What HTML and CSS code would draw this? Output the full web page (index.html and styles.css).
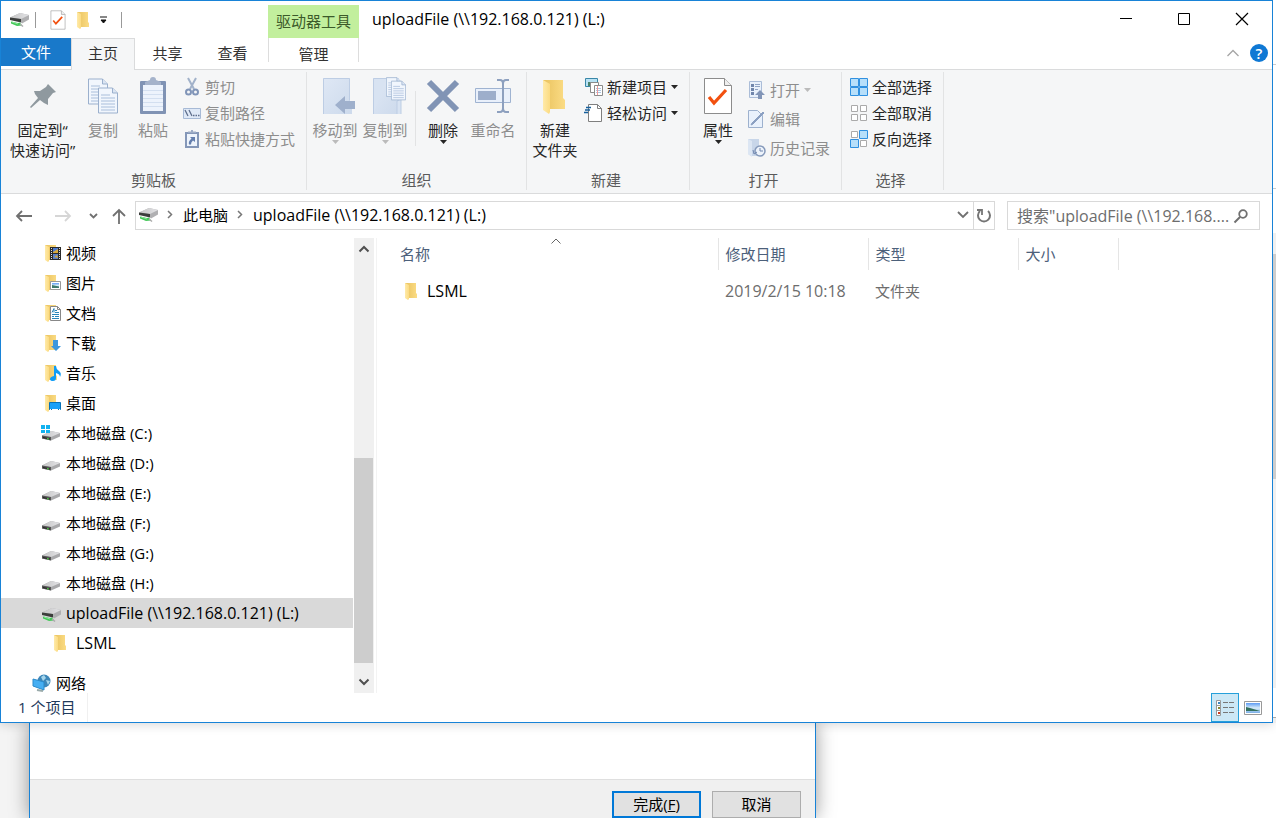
FILE: index.html
```
<!DOCTYPE html>
<html lang="zh-CN">
<head>
<meta charset="utf-8">
<title>uploadFile (\\192.168.0.121) (L:)</title>
<link rel="stylesheet" href="styles.css">
</head>
<body>
<svg class="defs" aria-hidden="true">
  <defs>
    <linearGradient id="gFront" x1="0" x2="1"><stop offset="0" stop-color="#ffeaa9"/><stop offset="1" stop-color="#fbdb82"/></linearGradient>
    <linearGradient id="gBack" x1="0" x2="1"><stop offset="0" stop-color="#e9c25e"/><stop offset="1" stop-color="#fbdc85"/></linearGradient>
    <linearGradient id="gDrive" x1="0" x2="1"><stop offset="0" stop-color="#c4c4c4"/><stop offset="1" stop-color="#e3e3e6"/></linearGradient>
    <linearGradient id="gBlue" x1="0" x2="1" y2="1"><stop offset="0" stop-color="#dfe8f5"/><stop offset="1" stop-color="#cddaec"/></linearGradient>
    <linearGradient id="gSky" x1="0" x2="0" y2="1"><stop offset="0" stop-color="#5c9bf5"/><stop offset=".5" stop-color="#d8ecf8"/><stop offset="1" stop-color="#7aaee8"/></linearGradient>
    <symbol id="folder" viewBox="0 0 16 18"><path d="M2 1h11v10l1 1v4H5z" fill="url(#gBack)"/><path d="M2 1l4 2v14l-1 1-3-2z" fill="url(#gFront)"/></symbol>
    <symbol id="drive" viewBox="0 0 20 16"><path d="M1 8.500l9-4.500 9 2v3.500l-9 4-9-2z" fill="#a9a9ab"/><path d="M1 8.500l9-4.500 9 2-9 4z" fill="url(#gDrive)"/><path d="M1 8.500l9 1.500v3.500l-9-2z" fill="#555"/><path d="M2 10l7 1.500v1L2 11z" fill="#262626"/><path d="M6 11l2 .4v1l-2-.4z" fill="#4fd545"/></symbol>
    <symbol id="netdrive" viewBox="0 0 20 16"><path d="M1 5.500L11 1l9 2v4.500l-7 4-2-2z" fill="#b0b0b2"/><path d="M1 5.500L11 1l9 2-8 4z" fill="url(#gDrive)"/><path d="M1 5.500L12 7v3.500L1 8z" fill="#3c3e3c"/><path d="M2 9.500l7 1.500 2-.5 2 3-5 .5-6-2.500z" fill="#45c95a"/><path d="M3 10l6 2" stroke="#8ce39a" fill="none"/><path d="M11 12l3 2.500" stroke="#aaa" stroke-width="1.500"/></symbol>
    <symbol id="check" viewBox="0 0 30 38"><path d="M1.500 1.500h20l7 7v28h-27z" fill="#fff" stroke="#8c8c8c"/><path d="M21.500 1.500v7h7" fill="#eee" stroke="#8c8c8c"/><path d="M6 20l5 6 12-13" fill="none" stroke="#f2500f" stroke-width="3.200"/></symbol>
    <symbol id="down" viewBox="0 0 7 4"><path d="M0 0h7L3.500 4z" fill="currentColor"/></symbol>
    <symbol id="doc" viewBox="0 0 20 26"><path d="M.5.500h14l5 5v20H.5z" fill="#f1f6fd" stroke="#9bb0cd"/><path d="M14.500.500v5h5" fill="#dbe5f3" stroke="#9bb0cd"/><path d="M3 7.500h9M3 10.500h14M3 13.500h14M3 16.500h14M3 19.500h14M3 22.500h14" stroke="#a9bedb"/></symbol>
  </defs>
</svg>
<div class="desktop">
  <div class="upper">
  <main class="explorer">
    <header class="titlebar">
      <div class="quick">
        <svg width="20" height="16"><use href="#netdrive"/></svg>
        <i class="bar"></i>
        <button class="qa" aria-label="属性"><svg width="16" height="20"><use href="#check"/></svg></button>
        <button class="qa" aria-label="新建文件夹"><svg width="16" height="18"><use href="#folder"/></svg></button>
        <button class="qa" aria-label="自定义快速访问工具栏"><svg width="8" height="8" viewBox="0 0 8 8"><path d="M0 1h7M1 4h5L3.500 7z" stroke="#111" fill="#111"/></svg></button>
        <i class="bar"></i>
      </div>
      <div class="context">驱动器工具</div>
      <h1 class="title latin">uploadFile (\\192.168.0.121) (L:)</h1>
      <div class="winbtns">
        <button aria-label="最小化"><svg width="12" height="12"><path d="M0 5.500h12" stroke="#000"/></svg></button>
        <button aria-label="最大化"><svg width="12" height="12"><path d="M.5.500h11v11H.5z" stroke="#000" fill="none"/></svg></button>
        <button aria-label="关闭"><svg width="12" height="12"><path d="M0 0l12 12M12 0L0 12" stroke="#000" stroke-width="1.200"/></svg></button>
      </div>
    </header>
    <nav class="tabs">
      <button class="tab file">文件</button>
      <button class="tab active">主页</button>
      <button class="tab">共享</button>
      <button class="tab">查看</button>
      <button class="tab manage">管理</button>
      <div class="tabend">
        <button aria-label="最小化功能区"><svg width="12" height="8"><path d="M.5 7L6 1.500 11.500 7" stroke="#a5a5a5" stroke-width="1.300" fill="none"/></svg></button>
        <button class="help" aria-label="帮助">?</button>
      </div>
    </nav>
    <section class="ribbon">
      <div class="group clip">
        <div class="tools">
          <button class="big pin"><svg viewBox="0 0 36 38"><path d="M23 7l8 8-3 1-5 6v6l-4-2-4-3-9 8-1-1 8-9-3-4-1-3h6l6-4z" fill="#8f999f"/></svg>固定到“<br>快速访问”</button>
          <button class="big off"><svg viewBox="0 0 36 38"><use href="#doc" x="3" y="1" width="20" height="27"/><use href="#doc" x="13" y="10" width="20" height="27"/></svg>复制</button>
          <button class="big off"><svg viewBox="0 0 36 38"><rect x="5" y="4" width="26" height="33" rx="1" fill="#8093b4"/><path d="M8 8h20v26H8z" fill="#edf3fc"/><path d="M8 13.500h20M8 17.500h20M8 21.500h20M8 25.500h20M8 29.500h20" stroke="#d3dff0"/><path d="M10 8V5l5-2a3 3 0 0 1 6 0l5 2v3z" fill="#a5b3cb"/></svg>粘贴</button>
          <div class="smalls">
            <button class="small off"><svg viewBox="0 0 18 18"><path d="M5 0l6 11M13 0L7 11" stroke="#a2b2ca" stroke-width="2"/><circle cx="5.500" cy="14" r="2.500" fill="none" stroke="#8195b8" stroke-width="2"/><circle cx="12.500" cy="14" r="2.500" fill="none" stroke="#8195b8" stroke-width="2"/></svg>剪切</button>
            <button class="small off"><svg viewBox="0 0 18 18"><path d="M.5 4.500h17v10H.5z" fill="#dfe9f7" stroke="#a7bad6"/><path d="M2 6l3 6M6 6l3 6M10 11.500h1.500M12.500 11.500h1.500M15 11.500h1.500" stroke="#5f6f8d" stroke-width="1.300"/></svg>复制路径</button>
            <button class="small off"><svg viewBox="0 0 18 18"><path d="M2 2h14v16H2z" fill="#8497b8"/><path d="M4 4h10v12H4z" fill="#eef4fc"/><path d="M5 3V1.500h3V0h2v1.500h3V3z" fill="#9dacc6"/><path d="M7 7h5v5l-2-1.500q-2 1.500-2 4H6q-1-3 2.500-6z" fill="#647fae"/></svg>粘贴快捷方式</button>
          </div>
        </div>
        <div class="caption">剪贴板</div>
      </div>
      <div class="group org">
        <div class="tools">
          <button class="big off"><svg viewBox="0 0 36 38"><path d="M6 1h27v27h2v9H6z" fill="url(#gBlue)"/><path d="M6.500 37V1.500h26v22" stroke="#bdcde4" fill="none"/><path d="M18 28l10-9v5h10v8H28v5z" fill="#9fb0cc"/></svg>移动到<svg class="arrow"><use href="#down"/></svg></button>
          <button class="big off"><svg viewBox="0 0 36 38"><path d="M6 1h26v36H6z" fill="url(#gBlue)"/><path d="M6.500 37V1.500H19M30 37V24l4-2v15" stroke="#bdcde4" fill="#d8e3f2"/><use href="#doc" x="19" y="-1" width="15" height="22"/><use href="#doc" x="24" y="3" width="15" height="21"/></svg>复制到<svg class="arrow"><use href="#down"/></svg></button>
          <i class="divider"></i>
          <button class="big"><svg viewBox="0 0 36 38"><path d="M4 5l28 28M32 5L4 33" stroke="#8194b5" stroke-width="6"/></svg>删除<svg class="arrow"><use href="#down"/></svg></button>
          <button class="big off"><svg viewBox="0 0 36 38"><path d="M.5 11.500h35v14H.5z" fill="#e9f0fb" stroke="#9fb3d1"/><path d="M3 14h18v9H3z" fill="#9daecb"/><path d="M22 3h3q3 0 3 4v24q0 4-3 4h-3M34 3h-3q-3 0-3 4v24q0 4 3 4h3" fill="none" stroke="#8da0bf" stroke-width="2"/></svg>重命名</button>
        </div>
        <div class="caption">组织</div>
      </div>
      <div class="group new">
        <div class="tools">
          <button class="big"><svg viewBox="0 0 36 38"><path d="M6 3h20v18l2 2v9H12z" fill="url(#gBack)"/><path d="M6 3l7 4v28l-1 2-6-4z" fill="url(#gFront)"/></svg>新建<br>文件夹</button>
          <div class="smalls">
            <button class="small"><svg viewBox="0 0 18 18"><path d="M.5.500h12v8H.5z" fill="#b9e2f4" stroke="#3987a8"/><path d="M3 4h3v4H3z" fill="#49826b"/><path d="M5.500 4.500h8v10h-8z" fill="#fff" stroke="#8b8b8b"/><path d="M9.500 7.500h8v10h-8z" fill="#fff" stroke="#8b8b8b"/><path d="M11 10.500h5M11 12.500h5M11 14.500h5" stroke="#a9c5e2"/><path d="M12.500 8v9" stroke="#e99"/></svg>新建项目<svg class="arrow"><use href="#down"/></svg></button>
            <button class="small"><svg viewBox="0 0 18 18"><path d="M3.500.500h9l4 4v13h-13z" fill="#fff" stroke="#7f7f7f"/><path d="M12.500.500v4h4" fill="none" stroke="#7f7f7f"/><path d="M1 3.500h5M0 6h5M-1 8.500h4" stroke="#17609d" stroke-width="1.300"/></svg>轻松访问<svg class="arrow"><use href="#down"/></svg></button>
          </div>
        </div>
        <div class="caption">新建</div>
      </div>
      <div class="group open">
        <div class="tools">
          <button class="big"><svg viewBox="0 0 30 38"><use href="#check"/></svg>属性<svg class="arrow"><use href="#down"/></svg></button>
          <div class="smalls wide">
            <button class="small off"><svg viewBox="0 0 18 18"><path d="M1.500.500h12v16h-12z" fill="#e9f1fb" stroke="#abbdd8"/><path d="M3 3h3v3H3zM3 7h3v3H3zM3 11h3v3H3z" fill="#7186ab"/><path d="M7 3.500h5M7 5.500h5M7 8.500h3" stroke="#91a4c4"/><path d="M12 9l5 5h-3v4h-4v-4H7z" fill="#8295b7"/></svg>打开<svg class="arrow"><use href="#down"/></svg></button>
            <button class="small off"><svg viewBox="0 0 18 18"><path d="M.5.500h9l5 5v12H.5z" fill="#e9f1fc" stroke="#9db1ce"/><path d="M5 14L16 3l-1-1L4 13l-1 2z" fill="#8ba0c2" stroke="#8ba0c2"/></svg>编辑</button>
            <button class="small off"><svg viewBox="0 0 18 18"><path d="M0 0h11v17H3l-3-2z" fill="#c8d6e9"/><path d="M0 0l4 2v16l-4-3z" fill="#dce6f3"/><circle cx="12" cy="12" r="5" fill="#edf3fb" stroke="#8599ba" stroke-width="1.500"/><path d="M12 9v3h3M5 11l1 4 3-2" stroke="#7087af" fill="none"/></svg>历史记录</button>
          </div>
        </div>
        <div class="caption">打开</div>
      </div>
      <div class="group select">
        <div class="tools">
          <div class="smalls">
            <button class="small"><svg viewBox="0 0 18 18"><path d="M.5.500h8v8h-8zM9.500.500h8v8h-8zM.5 9.500h8v8h-8zM9.500 9.500h8v8h-8z" fill="#b7dffa" stroke="#3090e0"/></svg>全部选择</button>
            <button class="small"><svg viewBox="0 0 18 18"><path d="M1.500 1.500h6v6h-6zM10.500 1.500h6v6h-6zM1.500 10.500h6v6h-6zM10.500 10.500h6v6h-6z" fill="#fff" stroke="#aaa"/></svg>全部取消</button>
            <button class="small"><svg viewBox="0 0 18 18"><path d="M1.500 1.500h6v6h-6zM10.500 10.500h6v6h-6z" fill="#fff" stroke="#aaa"/><path d="M9.500.500h8v8h-8zM.5 9.500h8v8h-8z" fill="#b7dffa" stroke="#3090e0"/></svg>反向选择</button>
          </div>
        </div>
        <div class="caption">选择</div>
      </div>
    </section>
    <div class="address">
      <div class="history">
        <button aria-label="后退"><svg width="16" height="12"><path d="M1 6h15M6 1L1 6l5 5" stroke="#707070" stroke-width="1.800" fill="none"/></svg></button>
        <button aria-label="前进"><svg width="16" height="12"><path d="M0 6h15M10 1l5 5-5 5" stroke="#d6d6d6" stroke-width="1.800" fill="none"/></svg></button>
        <button class="recent" aria-label="最近浏览的位置"><svg width="9" height="6"><path d="M1 1l3.500 3.500L8 1" stroke="#707070" stroke-width="1.800" fill="none"/></svg></button>
        <button class="up" aria-label="上移"><svg width="14" height="16"><path d="M7 16V2M1 8l6-6 6 6" stroke="#707070" stroke-width="1.800" fill="none"/></svg></button>
      </div>
      <div class="path">
        <svg width="20" height="16"><use href="#netdrive"/></svg>
        <svg class="sep" width="6" height="9"><path d="M1 1l3.500 3.500L1 8" stroke="#777" stroke-width="1.500" fill="none"/></svg>
        <a href="#pc">此电脑</a>
        <svg class="sep" width="6" height="9"><path d="M1 1l3.500 3.500L1 8" stroke="#777" stroke-width="1.500" fill="none"/></svg>
        <a href="#l" class="latin">uploadFile (\\192.168.0.121) (L:)</a>
        <button class="drop" aria-label="以前的位置"><svg width="12" height="8"><path d="M1 1l5 5 5-5" stroke="#707070" stroke-width="1.800" fill="none"/></svg></button>
        <button class="refresh" aria-label="刷新"><svg width="16" height="16"><path d="M4 3A6 6 0 1 0 12 3" stroke="#757575" stroke-width="2" fill="none"/><path d="M1 2h5v5" stroke="#757575" stroke-width="1.800" fill="none"/></svg></button>
      </div>
      <label class="search">
        <input class="latin" type="text" aria-label="搜索" placeholder='搜索"uploadFile (\\192.168....'>
        <svg width="14" height="14"><circle cx="9" cy="5" r="3.800" stroke="#707070" stroke-width="1.800" fill="none"/><path d="M6 8l-5.500 5.500" stroke="#707070" stroke-width="2"/></svg>
      </label>
    </div>
    <div class="content">
      <nav class="tree">
        <ul>
          <li><svg width="18" height="18"><use href="#folder" x="-1" width="16" height="18"/><path d="M6 3h11v13H6z" fill="#2a2a2a"/><path d="M9 4h5v5H9z" fill="#4a78d0"/><path d="M9 10h5v5H9z" fill="#5a80c8"/><path d="M9 8l5-3v4H9zM10 13l3-2 1 3z" fill="#d8a93a"/><path d="M7.500 4v12M15.500 4v12" stroke="#ddd" stroke-dasharray="1 1"/></svg>视频</li>
          <li><svg width="18" height="18"><use href="#folder" x="-1" width="16" height="18"/><path d="M6.500 7.500h10v8h-10z" fill="#fff" stroke="#999"/><path d="M8 9h7v5H8z" fill="url(#gSky)"/><path d="M8 11l7 1.500V14H8z" fill="#3c7a6c"/></svg>图片</li>
          <li><svg width="18" height="18"><use href="#folder" x="-1" width="16" height="18"/><path d="M6.500 2.500h7l3 3v11h-10z" fill="#fff" stroke="#888"/><path d="M13.500 2.500v3h3" fill="none" stroke="#888"/><path d="M8 8.500l2-4v4M11 6.500h2M11 8.500h4M8 10.500h7M8 12.500h2M11 12.500h4M8 14.500h7" stroke="#2987bb" fill="none"/></svg>文档</li>
          <li><svg width="18" height="18"><use href="#folder" x="-1" width="16" height="18"/><path d="M9 6h5v6h3l-5 5-5-5h2z" fill="#3c97dd"/></svg>下载</li>
          <li><svg width="18" height="18"><use href="#folder" x="-1" width="16" height="18"/><path d="M10 2h2q0 3 3 5t1 6q0-3-4-4v5q0 3-3 3t-3-2 4-3z" fill="#109df5"/></svg>音乐</li>
          <li><svg width="18" height="18"><use href="#folder" x="-1" width="16" height="18"/><path d="M5.500 8.500h11v7h-11z" fill="#1aa0f8" stroke="#0872b8"/><path d="M6 15.500h1M8 15.500h6M15 15.500h1" stroke="#fff"/></svg>桌面</li>
          <li><svg class="wide-icon" width="20" height="18"><use href="#drive" x="0" y="3" width="20" height="16"/><path d="M0 1h4v4H0zM5 1h4v4H5zM0 6h4v3H0zM5 6h4v3H5z" fill="#12b2f0"/></svg>本地磁盘 (C:)</li>
          <li><svg class="wide-icon" width="20" height="18"><use href="#drive" y="3" width="20" height="16"/></svg>本地磁盘 (D:)</li>
          <li><svg class="wide-icon" width="20" height="18"><use href="#drive" y="3" width="20" height="16"/></svg>本地磁盘 (E:)</li>
          <li><svg class="wide-icon" width="20" height="18"><use href="#drive" y="3" width="20" height="16"/></svg>本地磁盘 (F:)</li>
          <li><svg class="wide-icon" width="20" height="18"><use href="#drive" y="3" width="20" height="16"/></svg>本地磁盘 (G:)</li>
          <li><svg class="wide-icon" width="20" height="18"><use href="#drive" y="3" width="20" height="16"/></svg>本地磁盘 (H:)</li>
          <li class="selected latin"><svg class="wide-icon" width="20" height="18"><use href="#netdrive" y="3" width="20" height="16"/></svg>uploadFile (\\192.168.0.121) (L:)</li>
          <li class="child latin"><svg width="16" height="18"><use href="#folder"/></svg>LSML</li>
          <li class="network"><svg width="20" height="18"><circle cx="12" cy="7" r="6.500" fill="#3d87b9"/><path d="M9 3l3-2 2 3-3 3zM14 6l4 1-2 4z" fill="#a5d5eb"/><path d="M1 5l11 3v8L1 12z" fill="#45aef2" stroke="#2a8acb"/><path d="M5 16l6 1" stroke="#9aa" stroke-width="2"/></svg>网络</li>
        </ul>
      </nav>
      <div class="scroll">
        <svg width="12" height="8"><path d="M1.500 6.500L6 2l4.500 4.500" stroke="#505050" stroke-width="2" fill="none"/></svg>
        <div class="track"><div class="thumb"></div></div>
        <svg width="12" height="8"><path d="M1.500 1.500L6 6l4.500-4.500" stroke="#505050" stroke-width="2" fill="none"/></svg>
      </div>
      <div class="files">
        <table>
          <thead><tr><th class="c-name">名称<svg class="sort" width="10" height="6"><path d="M.5 5.500L5 1l4.500 4.500" stroke="#666" fill="none"/></svg></th><th class="c-date">修改日期</th><th class="c-type">类型</th><th class="c-size">大小</th><th class="c-rest"></th></tr></thead>
          <tbody><tr><td><span class="name latin"><svg width="16" height="18"><use href="#folder"/></svg>LSML</span></td><td class="latin">2019/2/15 10:18</td><td>文件夹</td><td></td><td></td></tr></tbody>
        </table>
      </div>
    </div>
    <footer class="status">
      <span class="count">1 个项目</span>
      <div class="views">
        <button class="view on" aria-label="详细信息"><svg width="18" height="16"><path d="M.5.500h4v15h-4zM.5 5.500h4M.5 10.500h4" fill="#fff" stroke="#999"/><path d="M2 2h2v2H2z" fill="#3c86bd"/><path d="M2 7h2v2H2z" fill="#8a8a30"/><path d="M2 12h2v2H2z" fill="#cc3a20"/><path d="M7 2.500h5M13 2.500h5M7 7.500h5M13 7.500h5M7 12.500h5M13 12.500h5" stroke="#777"/></svg></button>
        <button class="view" aria-label="大图标"><svg width="18" height="14"><path d="M.5.500h17v13H.5z" fill="#fff" stroke="#999"/><path d="M2 2h14v10H2z" fill="url(#gSky)"/><path d="M2 6l4 1 10 3H2z" fill="#33705e"/></svg></button>
      </div>
    </footer>
  </main>
  <div class="behind"></div>
  </div>
  <section class="lower">
    <div class="dialog">
      <div class="actions"><button class="default">完成(<u>F</u>)</button><button>取消</button></div>
    </div>
  </section>
</div>
</body>
</html>
```
FILE: styles.css
```
* { box-sizing: border-box; }
body, h1, ul { margin: 0; padding: 0; }
body {
  font: 15px/20px "Open Sans", "Noto Sans CJK SC", sans-serif;
  color: #000;
  background: #fff;
}
button, input { font: inherit; color: inherit; background: none; border: 0; padding: 0; margin: 0; }
button { white-space: nowrap; }
svg { flex: none; display: block; overflow: visible; }
ul { list-style: none; }
a { color: inherit; text-decoration: none; }
.defs { position: absolute; width: 0; height: 0; }
.latin { font-size: 16px; }

.desktop { height: 100vh; display: flex; flex-direction: column; overflow: hidden; }
.upper { flex: 1; min-height: 0; display: flex; position: relative; z-index: 1; }
.explorer {
  flex: 1;
  min-width: 0;
  display: flex;
  flex-direction: column;
  background: #fff;
  border: 1px solid #1883d7;
  box-shadow: 0 2px 10px rgba(0, 0, 0, .15);
}
.behind {
  width: 3px;
  background: linear-gradient(#fff 64px, #ccc 64px 65px, #fff 65px 188px, #ccc 188px 189px, #fff 189px 233px, #f0f0f0 233px 254px, #cdcdcd 254px 479px, #f0f0f0 479px 688px, #fff 688px 717px, #aaa 717px 718px, #eee 718px);
}

.titlebar { display: flex; height: 37px; }
.quick { width: 267px; display: flex; align-items: center; padding-left: 8px; }
.bar { width: 1px; height: 16px; background: #999; margin: 0 14px 0 6px; }
.qa { margin-right: 9px; }
.qa + .bar { margin-left: 4px; }
.context { width: 91px; margin-top: 4px; background: #c2ef9d; color: #3c5a2a; text-align: center; line-height: 33px; }
.title { flex: 1; font-weight: 400; line-height: 36px; padding-left: 13px; }
.winbtns { display: flex; padding-right: 1px; }
.winbtns button { width: 58px; display: grid; place-items: center; padding-bottom: 1px; }

.tabs { display: flex; height: 32px; border-bottom: 1px solid #dadbdc; }
.tab { width: 65px; height: 30px; color: #333; }
.tab.file { width: 70px; height: 28px; background: #1979ca; color: #fff; }
.tab.active { width: 64px; height: 32px; background: #f5f6f7; border: 1px solid #dadbdc; border-bottom: 0; padding-bottom: 3px; }
.tab.manage { width: 91px; margin-left: 3px; height: 24px; border: solid #ddd; border-width: 0 1px; padding-top: 6px; }
.tabend { margin-left: auto; display: flex; align-items: center; gap: 11px; padding: 0 4px 2px 0; }
.help { width: 18px; height: 18px; border-radius: 50%; background: #0f78d4; color: #fff; font-weight: 600; line-height: 18px; }

.ribbon { display: flex; height: 124px; background: #f5f6f7; border-bottom: 1px solid #dadbdc; padding-top: 2px; }
.group { display: flex; flex-direction: column; border-right: 1px solid #e2e3e4; height: 118px; flex: none; }
.tools { flex: 1; display: flex; align-items: flex-start; }
.caption { text-align: center; color: #5a5a5a; line-height: 20px; }
.clip { width: 306px; }
.org { width: 220px; }
.new { width: 163px; }
.open { width: 152px; }
.select { width: 102px; }
.org .tools { padding-left: 3px; }
.new .tools, .open .tools { padding-left: 2px; }
.select .tools { padding-left: 8px; }
.new .caption, .open .caption, .select .caption { padding-right: 4px; }
.big { width: 50px; display: block; color: #262626; padding-top: 5px; text-align: center; }
.big > svg:first-child { width: 36px; height: 38px; margin: 0 auto 5px; }
.big .arrow { margin: 0 auto; }
.pin { width: 83px; margin-right: -6px; }
.new .big, .open .big { width: 52px; }
.off { color: #8d8d8d; }
.off .arrow { color: #bbb; }
.arrow { width: 7px; height: 4px; }
.divider { width: 1px; height: 55px; background: #e2e3e4; margin: 19px 2px 0 5px; }
.smalls { display: grid; grid-auto-rows: 26px; padding: 2px 0 0 5px; }
.new .smalls, .open .smalls { padding-left: 4px; }
.smalls.wide { grid-auto-rows: 29px; padding-top: 3px; }
.small { display: flex; align-items: center; gap: 4px; color: #262626; }
.small.off { color: #8d8d8d; }
.small > svg:first-child { width: 18px; height: 18px; }
.select .smalls { padding-left: 0; }

.address { display: flex; padding: 7px 12px 8px 0; }
.history { width: 134px; display: flex; align-items: center; padding-left: 15px; }
.history button { margin-right: 23px; }
.history .recent { margin-right: 14px; margin-left: -5px; }
.history .up { margin-right: 0; }
.path { flex: 1; display: flex; align-items: center; height: 29px; border: 1px solid #d9d9d9; padding: 0 0 2px 2px; }
.sep { margin: 0 10px 0 9px; }
.drop { margin-left: auto; width: 20px; height: 27px; display: grid; place-items: center; }
.refresh { width: 21px; height: 27px; border-left: 1px solid #d9d9d9; display: grid; place-items: center; margin-bottom: -2px; }
.search { width: 253px; height: 29px; margin-left: 12px; border: 1px solid #d9d9d9; display: flex; align-items: center; padding: 0 11px 0 9px; }
.search input { flex: 1; min-width: 0; outline: 0; }
.search input::placeholder { color: #6d6d6d; opacity: 1; }

.content { flex: 1; min-height: 0; display: flex; overflow: hidden; }
.tree { width: 352px; overflow: hidden; }
.tree li { height: 30px; display: flex; align-items: center; gap: 4px; padding-left: 43px; white-space: nowrap; }
.tree .wide-icon { margin-left: -3px; width: 20px; margin-right: 1px; }
.tree .selected { background: #d9d9d9; }
.tree .child { padding-left: 51px; gap: 8px; }
.tree .network { margin-top: 10px; padding-left: 31px; }
.scroll { width: 20px; margin-left: 1px; background: #f0f0f0; display: flex; flex-direction: column; align-items: center; justify-content: space-between; padding: 7px 0; }
.track { flex: 1; width: 19px; margin: 7px 1px 7px 0; display: flex; flex-direction: column; justify-content: flex-end; }
.thumb { height: 50%; background: #cdcdcd; margin-bottom: 8px; }
.files { flex: 1; margin-left: 2px; border-left: 1px solid #f3f3f3; padding-left: 14px; }
table { width: 100%; table-layout: fixed; border-collapse: collapse; }
th { height: 32px; text-align: left; font-weight: 400; color: #4c607a; padding: 0 0 0 7px; border-right: 1px solid #e5e5e5; position: relative; }
td { padding: 0 0 0 7px; height: 42px; color: #6d6d6d; }
th:last-child { border: 0; }
.c-name { width: 327px; }
.c-date, .c-type { width: 150px; }
.c-size { width: 100px; }
th:first-child, td:first-child { padding-left: 9px; }
.sort { position: absolute; top: 0; left: 49%; }
.name { display: flex; align-items: center; gap: 8px; color: #000; padding-left: 3px; }

.status { height: 29px; display: flex; color: #1e395b; }
.count { padding: 0 12px 0 17px; line-height: 28px; border-right: 1px solid #f0f0f0; }
.views { margin-left: auto; display: flex; padding-right: 5px; }
.view { width: 28px; display: grid; place-items: center; }
.view.on { background: #cce8f6; border: 1px solid #26a0da; }

.lower { height: 95px; flex: none; display: flex; background: linear-gradient(90deg, #f4f4f4 29px, #fff 29px); padding-left: 29px; }
.dialog { width: 787px; max-width: 100%; background: #fff; border: solid #1883d7; border-width: 0 1px; box-shadow: 0 0 18px rgba(0, 0, 0, .4); display: flex; flex-direction: column; justify-content: flex-end; }
.actions { background: #f0f0f0; border-top: 1px solid #dfdfdf; display: flex; justify-content: flex-end; gap: 11px; padding: 11px 14px 0 0; }
.actions button { width: 89px; height: 27px; background: #e1e1e1; border: 1px solid #adadad; padding-bottom: 1px; }
.actions .default { border: 2px solid #0078d7; }
```
